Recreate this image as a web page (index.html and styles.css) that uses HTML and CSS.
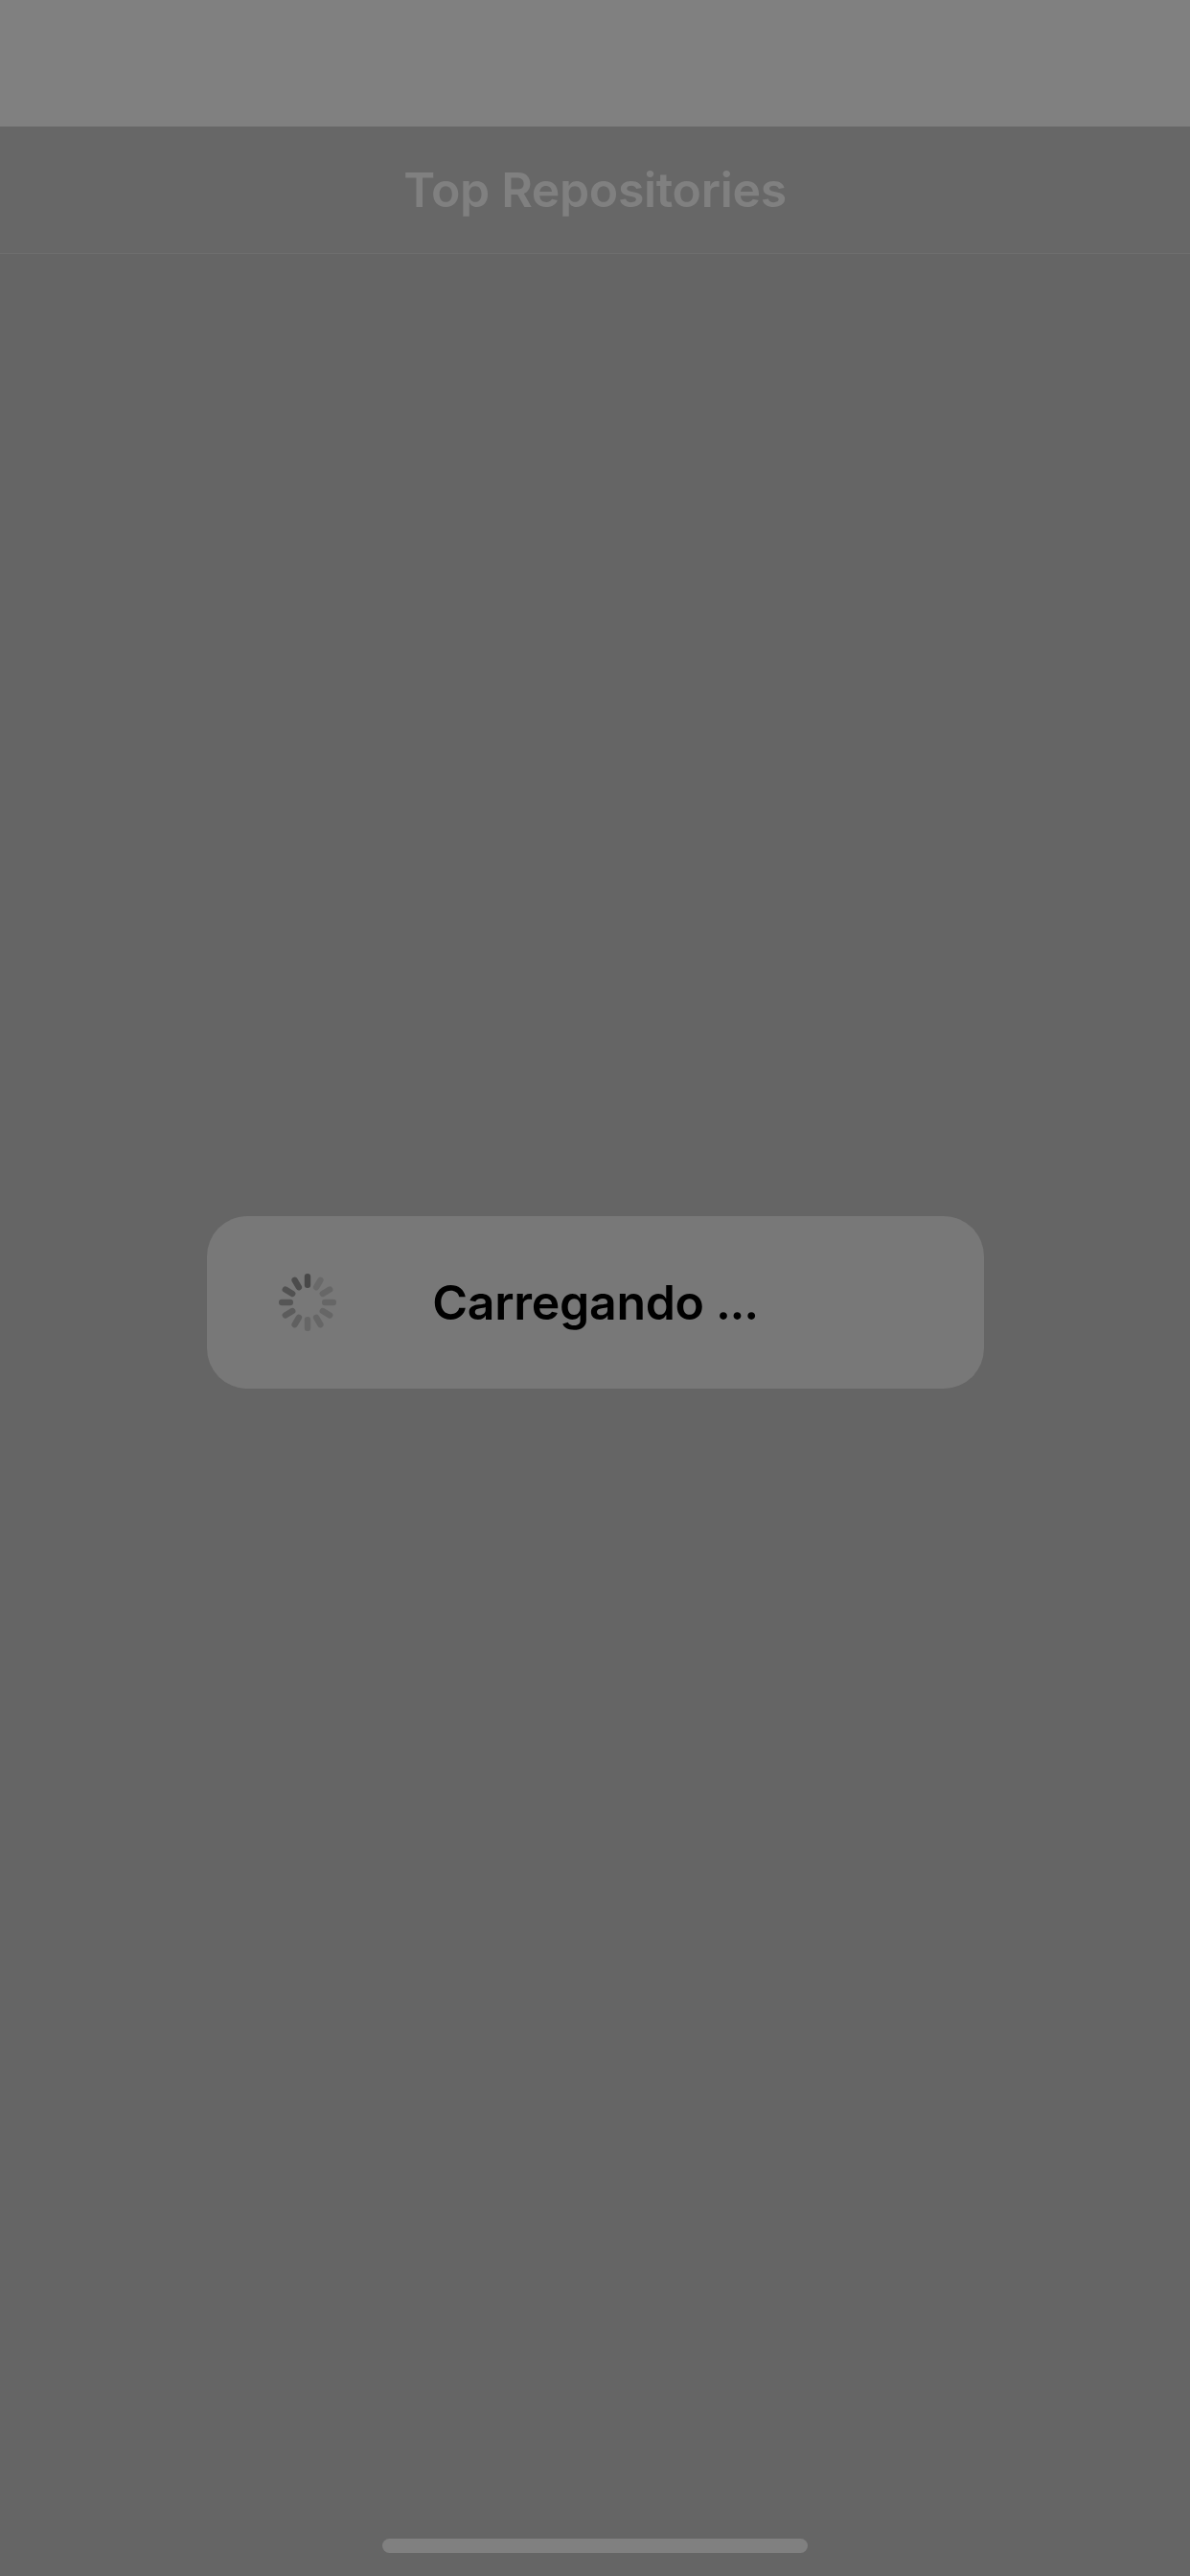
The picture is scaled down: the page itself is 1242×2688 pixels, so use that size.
FILE: index.html
```html
<!DOCTYPE html>
<html lang="pt">
<head>
<meta charset="utf-8">
<title>Top Repositories</title>
<link rel="stylesheet" href="styles.css">
</head>
<body>
<div class="screen">
  <div class="status"></div>
  <header class="navbar"><h1 class="title">Top Repositories</h1></header>
  <main class="content">
    <div class="alert" role="alert">
      <svg class="spinner" viewBox="-30 -30 60 60" fill="none" stroke-width="6.4" stroke-linecap="round">
        <path stroke="#484848" d="M0-18.2V-26.8"/>
        <path stroke="#696969" d="M9.1-15.8L13.4-23.2"/>
        <path stroke="#676767" d="M15.8-9.1L23.2-13.4"/>
        <path stroke="#666666" d="M18.2 0H26.8"/>
        <path stroke="#666666" d="M15.8 9.1L23.2 13.4"/>
        <path stroke="#666666" d="M9.1 15.8L13.4 23.2"/>
        <path stroke="#666666" d="M0 18.2V26.8"/>
        <path stroke="#606060" d="M-9.1 15.8L-13.4 23.2"/>
        <path stroke="#5c5c5c" d="M-15.8 9.1L-23.2 13.4"/>
        <path stroke="#565656" d="M-18.2 0H-26.8"/>
        <path stroke="#515151" d="M-15.8-9.1L-23.2-13.4"/>
        <path stroke="#4c4c4c" d="M-9.1-15.8L-13.4-23.2"/>
      </svg>
      <p class="message">Carregando <span class="dots">...</span></p>
    </div>
  </main>
  <footer class="home"><div class="indicator"></div></footer>
</div>
</body>
</html>
```
FILE: styles.css
```css
body { margin: 0; }
.screen {
  width: 1242px;
  height: 2688px;
  display: flex;
  flex-direction: column;
  background: #656565;
  font-family: Inter, "Liberation Sans", sans-serif;
}
.status { height: 132px; background: #808080; }
.navbar {
  height: 132px;
  display: flex;
  align-items: center;
  justify-content: center;
  background: #676767;
  border-bottom: 1px solid #6e6e6e;
}
.title { margin: 0; font-size: 50px; font-weight: 600; letter-spacing: -0.35px; color: #808080; }
.content { flex: 1; display: flex; justify-content: center; padding-top: 1004px; }
.alert {
  width: 811px;
  height: 180px;
  display: grid;
  grid-template-columns: 210px 1fr 210px;
  align-items: center;
  justify-items: center;
  align-content: center;
  border-radius: 42px;
  background: #787878;
}
.spinner { width: 60px; height: 60px; }
.message { margin: 0; font-size: 50px; font-weight: 600; letter-spacing: -0.3px; color: #000; white-space: nowrap; }
.dots { letter-spacing: -1.4px; }
.home { display: flex; justify-content: center; padding-bottom: 24px; }
.indicator { width: 444px; height: 15px; border-radius: 8px; background: #808080; }
```
